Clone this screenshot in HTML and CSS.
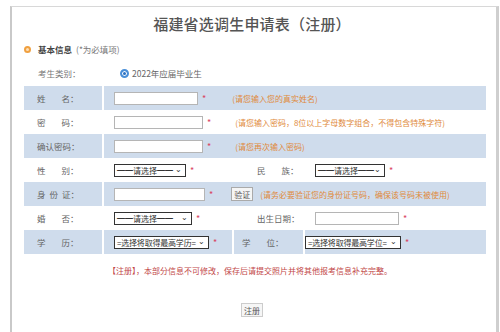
FILE: index.html
```html
<!DOCTYPE html>
<html lang="zh-CN">
<head>
<meta charset="utf-8">
<title>福建省选调生申请表（注册）</title>
<link rel="stylesheet" href="styles.css">
</head>
<body>
<div class="frame">
  <h1 class="title">福建省选调生申请表（注册）</h1>
  <div class="section"><span class="dot"></span><b>基本信息</b><span class="req">(*为必填项)</span></div>
  <div class="cat"><span class="cat-label">考生类别：</span><span class="radio"></span><span>2022年应届毕业生</span></div>

  <div class="form">
    <div class="row alt">
      <div class="lab"><span class="k1">姓</span>名：</div>
      <div class="cell grow"><span class="inp w84"></span><span class="star">*</span><span class="hint h1">(请您输入您的真实姓名)</span></div>
    </div>
    <div class="row">
      <div class="lab"><span class="k1">密</span>码：</div>
      <div class="cell grow"><span class="inp w89"></span><span class="star">*</span><span class="hint h2">(请您输入密码，8位以上字母数字组合，不得包含特殊字符)</span></div>
    </div>
    <div class="row alt">
      <div class="lab">确认密码：</div>
      <div class="cell grow"><span class="inp w89"></span><span class="star">*</span><span class="hint h2">(请您再次输入密码)</span></div>
    </div>
    <div class="row">
      <div class="lab"><span class="k1">性</span>别：</div>
      <div class="cell c130"><span class="sel w72">━━请选择━━<i class="chev">⌄</i></span><span class="star">*</span></div>
      <div class="lab2 p25"><span class="k1">民</span>族：</div>
      <div class="cell grow p22"><span class="sel w70">━━请选择━━<i class="chev">⌄</i></span><span class="star">*</span></div>
    </div>
    <div class="row alt">
      <div class="lab"><span class="k2">身</span><span class="k2">份</span>证：</div>
      <div class="cell grow"><span class="inp w91"></span><span class="star">*</span><span class="btn-verify">验证</span><span class="hint">(请务必要验证您的身份证号码，确保该号码未被使用)</span></div>
    </div>
    <div class="row">
      <div class="lab"><span class="k1">婚</span>否：</div>
      <div class="cell c130"><span class="sel w78">━━请选择━━<i class="chev">⌄</i></span><span class="star">*</span></div>
      <div class="lab2 p25">出生日期：</div>
      <div class="cell grow p22"><span class="inp w84"></span><span class="star">*</span></div>
    </div>
    <div class="row alt">
      <div class="lab"><span class="k1">学</span>历：</div>
      <div class="cell c130"><span class="sel w95">=选择将取得最高学历=<i class="chev">⌄</i></span><span class="star">*</span></div>
      <div class="lab2 sep p8 w71"><span class="k1">学</span>位：</div>
      <div class="cell grow p0"><span class="sel w96">=选择将取得最高学位=<i class="chev">⌄</i></span><span class="star">*</span></div>
    </div>
  </div>

  <p class="note">【注册】，本部分信息不可修改，保存后请提交照片并将其他报考信息补充完整。</p>
  <div class="actions"><span class="btn">注册</span></div>
</div>
</body>
</html>
```
FILE: styles.css
```css
html, body {
  margin: 0;
  padding: 0;
  background: #fff;
}
body {
  width: 500px;
  height: 332px;
  overflow: hidden;
  font-family: "Noto Sans CJK SC", "Noto Sans", sans-serif;
  color: #666;
  font-size: 8.5px;
}
.frame {
  margin: 6px 1px 0 10px;
  height: 326px;
  border-top: 1px solid #d8d8d8;
  border-left: 2px solid #c9c9c9;
  border-right: 3px solid #cfcfcf;
  padding: 0 10px 0 12px;
  box-sizing: border-box;
}
.title {
  margin: 8px 6px 0 0;
  font-size: 15px;
  line-height: 18px;
  font-weight: 500;
  color: #555;
  text-align: center;
  letter-spacing: 0.2px;
}
.section {
  display: flex;
  align-items: center;
  height: 14px;
  margin-top: 9px;
  color: #555;
}
.dot {
  width: 3px;
  height: 3px;
  border: 2px solid #f0a040;
  background: #fde0b8;
  border-radius: 50%;
  margin: 0 7px 0 0;
}
.section b {
  font-weight: 700;
  color: #444;
}
.req {
  margin-left: 4px;
  color: #777;
}
.cat {
  display: flex;
  align-items: center;
  height: 14px;
  margin-top: 10px;
  color: #666;
}
.cat-label {
  width: 82px;
  padding-left: 14px;
  color: #777;
}
.radio {
  width: 5px;
  height: 5px;
  border: 2px solid #4a8fd8;
  border-radius: 50%;
  background: #2a6fc0;
  box-shadow: inset 0 0 0 1px #fff;
  margin-right: 3px;
}
.form {
  margin-top: 6px;
}
.row {
  display: flex;
  align-items: stretch;
  height: 24px;
}
.row.alt {
  background: #cfdcec;
}
.lab, .lab2, .cell {
  display: flex;
  align-items: center;
}
.lab {
  width: 65px;
  padding-left: 13px;
  color: #666;
  white-space: nowrap;
}
.k1 { margin-right: 16px; }
.k2 { margin-right: 4px; }
.lab2 {
  white-space: nowrap;
  color: #666;
}
.cell {
  border-left: 2px solid #fff;
  padding-left: 10px;
  white-space: nowrap;
}
.row:not(.alt) .cell { border-left-color: transparent; }
.cell.grow { flex: 1; }
.cell.c130 { width: 118px; }
.p25 { padding-left: 25px; width: 34px; }
.p22 { padding-left: 22px; }
.p8 { padding-left: 8px; }
.p0 { padding-left: 0; }
.lab2.w71 { width: 61px; }
.lab2.sep { border-left: 2px solid #fff; }
.inp {
  display: inline-block;
  height: 11px;
  border: 1px solid #b5b5b5;
  background: #fff;
  box-sizing: content-box;
}
.w84 { width: 82px; }
.w89 { width: 87px; }
.w91 { width: 89px; }
.sel {
  display: inline-flex;
  align-items: center;
  justify-content: space-between;
  height: 11px;
  border: 1px solid #333;
  background: #fff;
  color: #333;
  font-size: 8px;
  line-height: 11px;
  padding: 0 3px 0 2px;
  box-sizing: content-box;
  overflow: hidden;
}
.sel.w72 { width: 65px; }
.sel.w70 { width: 63px; }
.sel.w78 { width: 71px; }
.sel.w95 { width: 88px; letter-spacing: -0.2px; }
.sel.w96 { width: 89px; letter-spacing: -0.2px; }
.chev {
  font-style: normal;
  font-size: 8px;
  line-height: 8px;
  margin-top: -3px;
  color: #333;
}
.star {
  color: #d9455f;
  margin-left: 4px;
  font-size: 9px;
}
.hint {
  color: #e0893a;
  font-size: 8px;
  margin-left: 26px;
}
.hint.h1 { margin-left: 26px; }
.hint.h2 { margin-left: 24px; }
.btn-verify + .hint { margin-left: 7px; }
.btn-verify {
  display: inline-flex;
  align-items: center;
  justify-content: center;
  height: 12px;
  padding: 0 2px;
  margin-left: 18px;
  border: 1px solid #aaa;
  background: #f5f5f5;
  color: #555;
  font-size: 8px;
}
.note {
  margin: 10px 0 0 0;
  text-align: center;
  color: #c24848;
  font-size: 8px;
  line-height: 14px;
  padding-right: 10px;
}
.actions {
  display: flex;
  justify-content: center;
  margin-top: 25px;
  padding-right: 6px;
}
.btn {
  display: inline-flex;
  align-items: center;
  justify-content: center;
  height: 12px;
  padding: 0 2px;
  border: 1px solid #ccc;
  background: #f6f6f6;
  color: #555;
  font-size: 8px;
}
```
